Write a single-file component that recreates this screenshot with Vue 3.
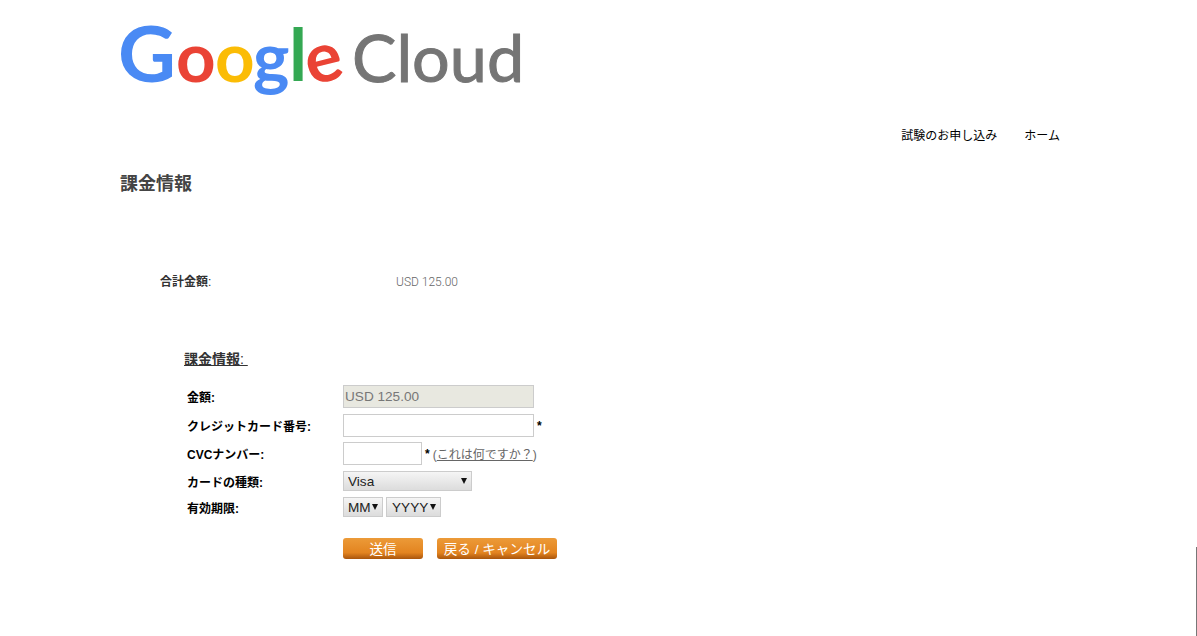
<template>
  <div class="page">
    <header class="logo">
      <svg width="420" height="125" viewBox="0 0 420 125" role="img" aria-label="Google Cloud">
        <g class="goog">
          <text x="-3" y="82" class="cap blue" textLength="58" lengthAdjust="spacingAndGlyphs">G</text>
          <text x="55" y="82" class="low red">o</text>
          <text x="94" y="82" class="low yellow">o</text>
          <text x="132" y="82" class="low blue">g</text>
          <text x="168" y="81" class="ell green">l</text>
          <text x="185" y="82" class="low red" transform="rotate(-14 202 65)">e</text>
        </g>
        <text x="231" y="82" class="cloud">Cloud</text>
      </svg>
    </header>

    <nav class="top-nav">
      <a href="#">試験のお申し込み</a>
      <a href="#">ホーム</a>
    </nav>

    <h1 class="page-title">課金情報</h1>

    <div class="total-row">
      <span class="total-label"><b>合計金額</b>:</span>
      <span class="total-value">USD 125.00</span>
    </div>

    <h2 class="section-title"><b>課金情報</b>:&nbsp;</h2>

    <form class="billing-form" @submit.prevent>
      <label class="form-label">金額:</label>
      <div class="form-field">
        <input class="text-input wide readonly" type="text" value="USD 125.00" readonly />
      </div>

      <label class="form-label">クレジットカード番号:</label>
      <div class="form-field">
        <input class="text-input wide" type="text" />
        <span class="required">*</span>
      </div>

      <label class="form-label">CVCナンバー:</label>
      <div class="form-field">
        <input class="text-input short" type="text" />
        <span class="required">*</span>
        <span class="help">(<a href="#">これは何ですか？</a>)</span>
      </div>

      <label class="form-label">カードの種類:</label>
      <div class="form-field">
        <div class="select-wrap card-type">
          <select v-model="cardType">
            <option v-for="c in cardTypes" :key="c">{{ c }}</option>
          </select>
        </div>
      </div>

      <label class="form-label">有効期限:</label>
      <div class="form-field expiry">
        <div class="select-wrap month">
          <select><option>MM</option></select>
        </div>
        <div class="select-wrap year">
          <select><option>YYYY</option></select>
        </div>
      </div>

      <div class="form-actions">
        <button class="btn send" type="submit">送信</button>
        <button class="btn back" type="button">戻る / キャンセル</button>
      </div>
    </form>

    <div class="scroll-edge"></div>
  </div>
</template>

<script setup>
import { ref } from 'vue'

const cardTypes = ['Visa', 'MasterCard', 'American Express']
const cardType = ref('Visa')
</script>

<style scoped>
.page {
  position: relative;
  height: 636px;
  overflow: hidden;
  padding: 0 137px 0 121px;
  box-sizing: border-box;
  font-family: "Liberation Sans", "Noto Sans CJK JP", sans-serif;
  color: #000;
  background: #fff;
}

.logo {
  height: 125px;
}
.logo svg {
  display: block;
  overflow: visible;
}
.cap,
.low,
.ell {
  font-family: Lato, sans-serif;
  font-weight: 700;
}
.cap { font-size: 77px; }
.low { font-size: 69px; }
.ell { font-size: 73px; }
.blue { fill: #4a8af4; }
.red { fill: #ea4335; }
.yellow { fill: #fbbc05; }
.green { fill: #34a853; }
.cloud {
  fill: #757575;
  font-family: Lato, sans-serif;
  font-size: 66.5px;
  font-weight: 400;
  stroke: #757575;
  stroke-width: 1px;
}

.top-nav {
  display: flex;
  justify-content: flex-end;
  gap: 27px;
  height: 22px;
  font-size: 12px;
  line-height: 22px;
}
.top-nav a {
  color: #000;
  text-decoration: none;
}

.page-title {
  margin: 25px 0 0 -1px;
  color: #444;
  font-size: 18px;
  line-height: 24px;
}

.total-row {
  display: flex;
  margin: 77px 0 0 39px;
  font-size: 12px;
  line-height: 18px;
}
.total-label {
  width: 236px;
  color: #333;
}
.total-value {
  color: #666;
  font-family: Roboto, sans-serif;
  font-weight: 300;
}

.section-title {
  margin: 58px 0 0 63px;
  color: #333;
  font-size: 14px;
  font-weight: normal;
  line-height: 20px;
  text-decoration: underline;
}

.billing-form {
  display: grid;
  grid-template-columns: 156px 1fr;
  grid-template-rows: 29px 29px 27px 28px 24px;
  margin: 13px 0 0 66px;
  font-size: 12px;
}
.form-label {
  display: flex;
  align-items: center;
  font-weight: bold;
}
.form-field {
  display: flex;
  align-items: center;
  gap: 3px;
}
.text-input {
  box-sizing: border-box;
  height: 23px;
  padding: 0 1px;
  border: 1px solid #ccc;
  background: #fff;
  color: #777;
  font-family: inherit;
  font-size: 13.6px;
  outline: none;
}
.wide { width: 191px; }
.short { width: 79px; }
.readonly { background: #e8e8e0; }

.required { font-weight: bold; }
.help { color: #666; }
.help a { color: #666; }

.select-wrap {
  position: relative;
  height: 20px;
}
.select-wrap select {
  display: block;
  box-sizing: border-box;
  width: 100%;
  height: 20px;
  padding: 0 0 0 4px;
  border: 1px solid #ccc;
  border-radius: 0;
  background: linear-gradient(#f5f5f5, #dcdcdc);
  color: #222;
  font-family: inherit;
  font-size: 13.6px;
  appearance: none;
  outline: none;
}
.select-wrap::after {
  content: "";
  position: absolute;
  top: 7px;
  right: 5px;
  border-top: 6px solid #111;
  border-left: 3.5px solid transparent;
  border-right: 3.5px solid transparent;
  pointer-events: none;
}
.card-type { width: 129px; }
.month { width: 40px; }
.year { width: 55px; }
.year select { padding-left: 5px; }

.form-actions {
  grid-column: 2;
  display: flex;
  gap: 14px;
  margin-top: 19px;
}
.btn {
  height: 21px;
  padding: 2px 0 0;
  border: none;
  border-radius: 3px;
  background: linear-gradient(#ec9a38, #e38420 70%, #a9550c);
  color: #fff;
  font-family: inherit;
  font-size: 13.6px;
  line-height: 19px;
}
.send { width: 80px; }
.back { width: 120px; }

.scroll-edge {
  position: absolute;
  right: 0;
  top: 547px;
  bottom: 0;
  width: 1px;
  background: #777;
}
</style>
